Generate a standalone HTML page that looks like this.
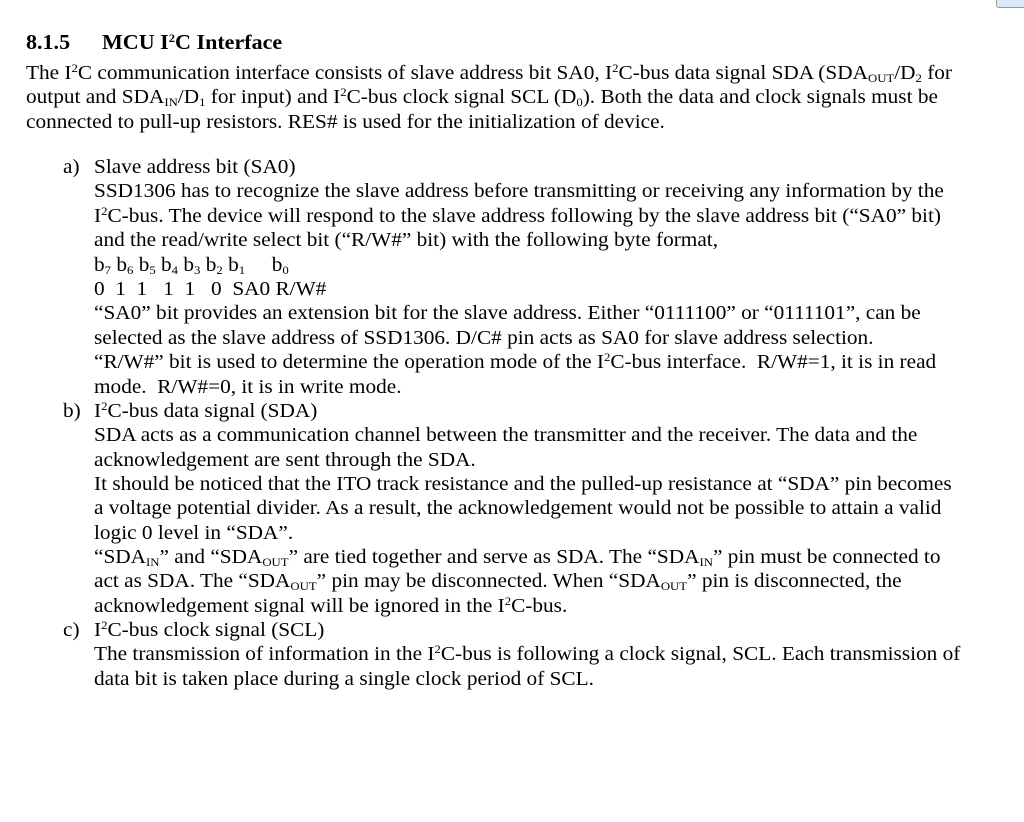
<!DOCTYPE html>
<html><head><meta charset="utf-8"><style>
body{margin:0;width:1024px;height:822px;background:#fff;overflow:hidden;position:relative;font-family:"Liberation Serif",serif;font-size:20px;color:#000}
.l{position:absolute;white-space:pre;line-height:24px;height:24px;transform:scaleX(1.064);transform-origin:0 50%}
sub{font-size:12px;vertical-align:-3px;line-height:0}
sup{font-size:12px;vertical-align:7px;line-height:0}
.h{font-weight:bold;font-size:21px;transform:scaleX(1.05)}
.btn{position:absolute;left:996px;top:-4px;width:30px;height:10px;border:1px solid #9a9a9a;border-radius:3px;background:#dbe8f8}
</style></head><body>
<div class="btn"></div>
<div class="l h" style="left:26px;top:30px">8.1.5</div>
<div class="l h" style="left:102px;top:30px">MCU I<sup>2</sup>C Interface</div>
<div class="l" style="left:26px;top:61px">The I<sup>2</sup>C communication interface consists of slave address bit SA0, I<sup>2</sup>C-bus data signal SDA (SDA<sub>OUT</sub>/D<sub>2</sub> for</div>
<div class="l" style="left:26px;top:85px">output and SDA<sub>IN</sub>/D<sub>1</sub> for input) and I<sup>2</sup>C-bus clock signal SCL (D<sub>0</sub>). Both the data and clock signals must be</div>
<div class="l" style="left:26px;top:110px">connected to pull-up resistors. RES# is used for the initialization of device.</div>
<div class="l" style="left:63px;top:155px">a)</div>
<div class="l" style="left:94px;top:155px">Slave address bit (SA0)</div>
<div class="l" style="left:94px;top:179px">SSD1306 has to recognize the slave address before transmitting or receiving any information by the</div>
<div class="l" style="left:94px;top:204px">I<sup>2</sup>C-bus. The device will respond to the slave address following by the slave address bit (“SA0” bit)</div>
<div class="l" style="left:94px;top:228px">and the read/write select bit (“R/W#” bit) with the following byte format,</div>
<div class="l" style="left:94px;top:253px">b<sub>7</sub> b<sub>6</sub> b<sub>5</sub> b<sub>4</sub> b<sub>3</sub> b<sub>2</sub> b<sub>1</sub>     b<sub>0</sub></div>
<div class="l" style="left:94px;top:277px">0  1  1   1  1   0  SA0 R/W#</div>
<div class="l" style="left:94px;top:301px">“SA0” bit provides an extension bit for the slave address. Either “0111100” or “0111101”, can be</div>
<div class="l" style="left:94px;top:326px">selected as the slave address of SSD1306. D/C# pin acts as SA0 for slave address selection.</div>
<div class="l" style="left:94px;top:350px">“R/W#” bit is used to determine the operation mode of the I<sup>2</sup>C-bus interface.  R/W#=1, it is in read</div>
<div class="l" style="left:94px;top:375px">mode.  R/W#=0, it is in write mode.</div>
<div class="l" style="left:63px;top:399px">b)</div>
<div class="l" style="left:94px;top:399px">I<sup>2</sup>C-bus data signal (SDA)</div>
<div class="l" style="left:94px;top:423px">SDA acts as a communication channel between the transmitter and the receiver. The data and the</div>
<div class="l" style="left:94px;top:448px">acknowledgement are sent through the SDA.</div>
<div class="l" style="left:94px;top:472px">It should be noticed that the ITO track resistance and the pulled-up resistance at “SDA” pin becomes</div>
<div class="l" style="left:94px;top:496px">a voltage potential divider. As a result, the acknowledgement would not be possible to attain a valid</div>
<div class="l" style="left:94px;top:521px">logic 0 level in “SDA”.</div>
<div class="l" style="left:94px;top:545px">“SDA<sub>IN</sub>” and “SDA<sub>OUT</sub>” are tied together and serve as SDA. The “SDA<sub>IN</sub>” pin must be connected to</div>
<div class="l" style="left:94px;top:569px">act as SDA. The “SDA<sub>OUT</sub>” pin may be disconnected. When “SDA<sub>OUT</sub>” pin is disconnected, the</div>
<div class="l" style="left:94px;top:594px">acknowledgement signal will be ignored in the I<sup>2</sup>C-bus.</div>
<div class="l" style="left:63px;top:618px">c)</div>
<div class="l" style="left:94px;top:618px">I<sup>2</sup>C-bus clock signal (SCL)</div>
<div class="l" style="left:94px;top:642px">The transmission of information in the I<sup>2</sup>C-bus is following a clock signal, SCL. Each transmission of</div>
<div class="l" style="left:94px;top:667px">data bit is taken place during a single clock period of SCL.</div>
</body></html>
